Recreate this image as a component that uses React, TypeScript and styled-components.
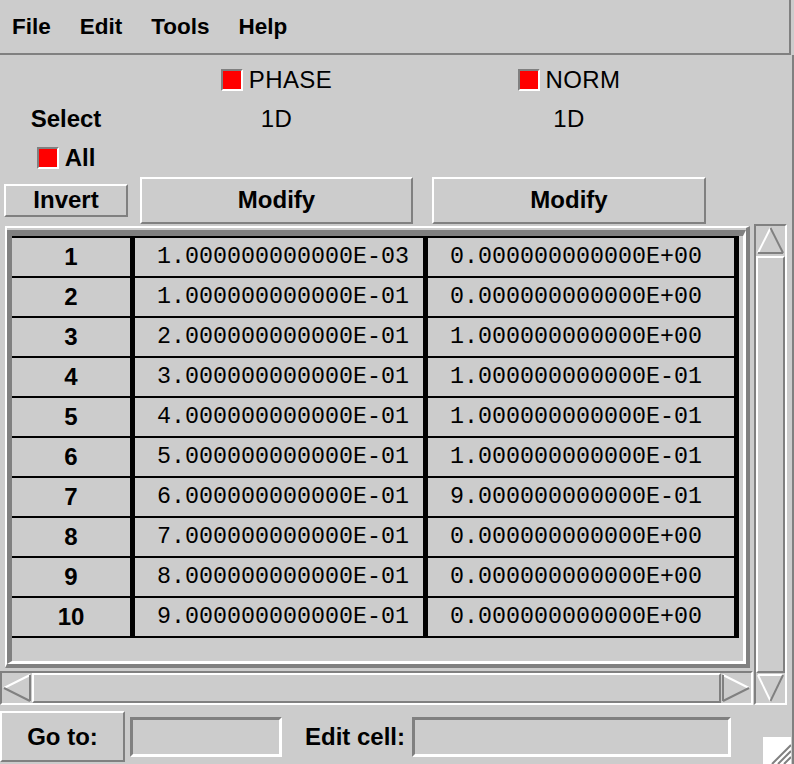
import React from "react";
import styled, { createGlobalStyle } from "styled-components";

const BG = "#cccccc";
const DARK = "#808080";
const LIGHT = "#ffffff";

const GlobalStyle = createGlobalStyle`
  * { box-sizing: border-box; }
  html, body { margin: 0; padding: 0; background: ${BG}; }
  body { font-family: "Liberation Sans", Arial, sans-serif; color: #000; }
`;

const values: Array<[string, string]> = [
  ["1.000000000000E-03", "0.000000000000E+00"],
  ["1.000000000000E-01", "0.000000000000E+00"],
  ["2.000000000000E-01", "1.000000000000E+00"],
  ["3.000000000000E-01", "1.000000000000E-01"],
  ["4.000000000000E-01", "1.000000000000E-01"],
  ["5.000000000000E-01", "1.000000000000E-01"],
  ["6.000000000000E-01", "9.000000000000E-01"],
  ["7.000000000000E-01", "0.000000000000E+00"],
  ["8.000000000000E-01", "0.000000000000E+00"],
  ["9.000000000000E-01", "0.000000000000E+00"],
];

type Dir = "up" | "down" | "left" | "right";

const Arrow: React.FC<{ dir: Dir }> = ({ dir }) => {
  // tk style 3d triangles: light edges face up/left, dark edges face down/right
  let lines: Array<[number, number, number, number, string]> = [];
  if (dir === "up")
    lines = [
      [2, 27, 15, 2, LIGHT],
      [15, 2, 28, 27, DARK],
      [2, 27, 28, 27, DARK],
    ];
  if (dir === "down")
    lines = [
      [2, 2, 28, 2, LIGHT],
      [2, 2, 15, 28, LIGHT],
      [15, 28, 28, 2, DARK],
    ];
  if (dir === "left")
    lines = [
      [2, 15, 28, 2, LIGHT],
      [2, 15, 28, 28, DARK],
      [28, 2, 28, 28, DARK],
    ];
  if (dir === "right")
    lines = [
      [2, 2, 28, 15, LIGHT],
      [2, 28, 28, 15, DARK],
      [2, 2, 2, 28, DARK],
    ];
  return (
    <ArrowBox>
      <svg width="100%" height="100%" viewBox="0 0 30 30" preserveAspectRatio="none">
        {lines.map(([x1, y1, x2, y2, c], i) => (
          <line key={i} x1={x1} y1={y1} x2={x2} y2={y2} stroke={c} strokeWidth={2} />
        ))}
      </svg>
    </ArrowBox>
  );
};

const App: React.FC = () => {
  return (
    <Window>
      <GlobalStyle />
      <MenuBar>
        <MenuItem>File</MenuItem>
        <MenuItem>Edit</MenuItem>
        <MenuItem>Tools</MenuItem>
        <MenuItem>Help</MenuItem>
      </MenuBar>
      <Body>
        <TopGrid>
          <Cell col={4} row={1}>
            <Check />
            <HeadLabel>PHASE</HeadLabel>
          </Cell>
          <Cell col={6} row={1}>
            <Check />
            <HeadLabel>NORM</HeadLabel>
          </Cell>
          <Cell col={2} row={2}>
            <Label>Select</Label>
          </Cell>
          <Cell col={4} row={2}>
            <HeadLabel>1D</HeadLabel>
          </Cell>
          <Cell col={6} row={2}>
            <HeadLabel>1D</HeadLabel>
          </Cell>
          <Cell col={2} row={3}>
            <Check />
            <Label>All</Label>
          </Cell>
          <Cell col={2} row={4}>
            <Button w={124} h={33}>Invert</Button>
          </Cell>
          <Cell col={4} row={4}>
            <Button w={273} h={47}>Modify</Button>
          </Cell>
          <Cell col={6} row={4}>
            <Button w={274} h={47}>Modify</Button>
          </Cell>
        </TopGrid>

        <TableSection>
          <Frame>
            <Well>
              <Table>
                {values.map((v, i) => (
                  <Row key={i}>
                    <NumCell>{i + 1}</NumCell>
                    <ValueCell>{v[0]}</ValueCell>
                    <ValueCell>{v[1]}</ValueCell>
                  </Row>
                ))}
              </Table>
            </Well>
          </Frame>
          <HScroll>
            <Arrow dir="left" />
            <Slider />
            <Arrow dir="right" />
          </HScroll>
          <VScroll>
            <Arrow dir="up" />
            <Slider />
            <Arrow dir="down" />
          </VScroll>
        </TableSection>

        <Footer>
          <Button w={125} h={51}>Go to:</Button>
          <Entry w={152} gap={5} />
          <FooterLabel>Edit cell:</FooterLabel>
          <Entry w={319} gap={7} />
          <Grip>
            <svg width="28" height="27" viewBox="0 0 28 27">
              <rect width="28" height="27" fill={LIGHT} />
              <line x1="28" y1="8" x2="9" y2="27" stroke={DARK} strokeWidth="2" />
              <line x1="28" y1="14" x2="15" y2="27" stroke={DARK} strokeWidth="2" />
              <line x1="28" y1="20" x2="21" y2="27" stroke={DARK} strokeWidth="2" />
            </svg>
          </Grip>
        </Footer>
      </Body>
    </Window>
  );
};

const Window = styled.div`
  width: 794px;
  height: 764px;
  overflow: hidden;
  display: flex;
  flex-direction: column;
  background: ${BG};
`;

const MenuBar = styled.div`
  width: 791px;
  height: 55px;
  flex-shrink: 0;
  display: flex;
  align-items: center;
  gap: 29px;
  padding-left: 12px;
  border-bottom: 2px solid ${DARK};
  border-right: 2px solid ${DARK};
`;

const MenuItem = styled.span`
  font-size: 22.5px;
  font-weight: bold;
`;

const Body = styled.div`
  flex: 1;
  display: flex;
  flex-direction: column;
  border-right: 2px solid ${DARK};
`;

const TopGrid = styled.div`
  display: grid;
  grid-template-columns: 4px 124px 12px 273px 19px 274px;
  grid-template-rows: 36px 42px 36px 48px;
  padding-top: 7px;
`;

const Cell = styled.div<{ col: number; row: number }>`
  grid-column: ${(p) => p.col};
  grid-row: ${(p) => p.row};
  display: flex;
  align-items: center;
  justify-content: center;
  gap: 6px;
`;

const Check = styled.span`
  width: 22px;
  height: 22px;
  background: #ff0000;
  border: 2px solid;
  border-color: ${DARK} ${LIGHT} ${LIGHT} ${DARK};
`;

const Label = styled.span`
  font-size: 24px;
  font-weight: bold;
`;

const HeadLabel = styled.span`
  font-size: 24px;
  letter-spacing: 0.4px;
`;

const Button = styled.div<{ w: number; h: number }>`
  width: ${(p) => p.w}px;
  height: ${(p) => p.h}px;
  flex-shrink: 0;
  display: flex;
  align-items: center;
  justify-content: center;
  font-size: 24px;
  font-weight: bold;
  background: ${BG};
  border: 2px solid;
  border-color: ${LIGHT} ${DARK} ${DARK} ${LIGHT};
`;

const TableSection = styled.div`
  display: grid;
  grid-template-columns: 754px 33px;
  grid-template-rows: 447px 34px;
`;

const Frame = styled.div`
  grid-column: 1;
  grid-row: 1;
  margin: 2px 4px 3px 5px;
  padding-top: 2px;
  display: flex;
  border-style: solid;
  border-width: 2px 4px 4px 2px;
  border-color: ${LIGHT} ${DARK} ${DARK} ${LIGHT};
`;

const Well = styled.div`
  flex: 1;
  border-style: solid;
  border-width: 6px 3px 3px 5px;
  border-color: ${DARK} ${LIGHT} ${LIGHT} ${DARK};
`;

const Table = styled.div`
  width: 727px;
  border-top: 2px solid #000;
`;

const Row = styled.div`
  display: grid;
  grid-template-columns: 123px 293px 311px;
  height: 40px;
  border-bottom: 2px solid #000;
`;

const NumCell = styled.div`
  display: flex;
  align-items: center;
  justify-content: center;
  font-size: 24px;
  font-weight: bold;
  border-right: 5px solid #000;
`;

const ValueCell = styled.div`
  display: flex;
  align-items: center;
  padding-left: 22px;
  font-family: "Liberation Mono", "Courier New", monospace;
  font-size: 23.33px;
  border-right: 5px solid #000;
`;

const HScroll = styled.div`
  grid-column: 1;
  grid-row: 2;
  width: 753px;
  display: flex;
  border: 2px solid;
  border-color: ${DARK} ${LIGHT} ${LIGHT} ${DARK};
`;

const VScroll = styled.div`
  grid-column: 2;
  grid-row: 1 / span 2;
  display: flex;
  flex-direction: column;
  border: 2px solid;
  border-color: ${DARK} ${LIGHT} ${LIGHT} ${DARK};
`;

const ArrowBox = styled.div`
  width: 30px;
  height: 30px;
  flex-shrink: 0;
  align-self: stretch;
  ${VScroll} & {
    width: auto;
  }
`;

const Slider = styled.div`
  flex: 1;
  border: 2px solid;
  border-color: ${LIGHT} ${DARK} ${DARK} ${LIGHT};
`;

const Footer = styled.div`
  flex: 1;
  display: flex;
  align-items: center;
  padding-top: 4px;
`;

const Entry = styled.div<{ w: number; gap: number }>`
  width: ${(p) => p.w}px;
  height: 40px;
  margin-left: ${(p) => p.gap}px;
  border: 3px solid;
  border-color: ${DARK} ${LIGHT} ${LIGHT} ${DARK};
`;

const FooterLabel = styled.span`
  margin-left: 23px;
  font-size: 24px;
  font-weight: bold;
`;

const Grip = styled.div`
  margin-left: auto;
  margin-right: 1px;
  align-self: flex-end;
  height: 27px;
  display: flex;
`;

export default App;
